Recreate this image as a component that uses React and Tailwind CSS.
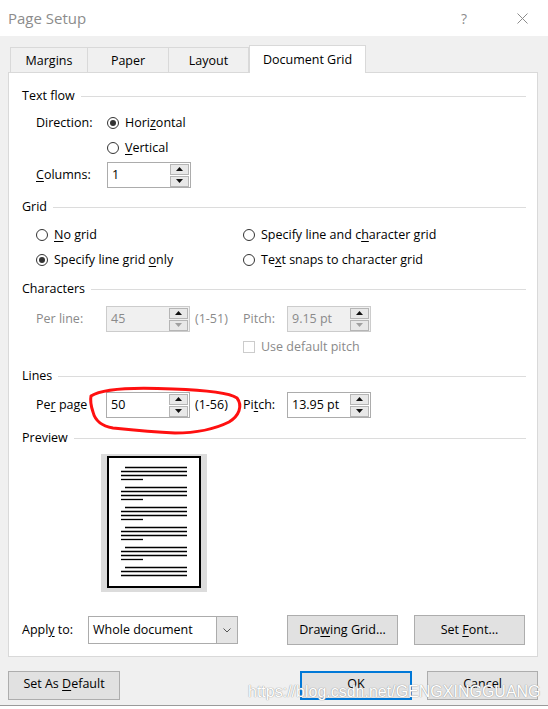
import React from "react";

const font = { fontFamily: '"Open Sans", "Noto Sans", sans-serif' };

// small underlined access key letter
const U = ({ children }) => <span className="underline underline-offset-2">{children}</span>;

const Radio = ({ checked, children }) => (
  <div className="flex items-center gap-[6px]">
    <span className="flex h-[12px] w-[12px] items-center justify-center rounded-full border border-[#333333] bg-white">
      {checked && <span className="h-[6px] w-[6px] rounded-full bg-[#333333]" />}
    </span>
    <span>{children}</span>
  </div>
);

const Arrow = ({ up, dim }) => (
  <svg width="7" height="4" viewBox="0 0 7 4">
    {up ? (
      <path d="M0 4 L3.5 0 L7 4 Z" fill={dim ? "#888" : "#111"} />
    ) : (
      <path d="M0 0 L3.5 4 L7 0 Z" fill={dim ? "#a0a0a0" : "#111"} />
    )}
  </svg>
);

const Spin = ({ value, disabled }) => (
  <div
    className={`flex h-[26px] w-[84px] items-center border ${
      disabled ? "border-[#cccccc] bg-[#f0f0f0] text-[#8a8a8a]" : "border-[#acacac] bg-white text-black"
    }`}
  >
    <span className="flex-1 pl-[4px]">{value}</span>
    <div className="mr-[1px] flex flex-col gap-[1px]">
      <span className="flex h-[11px] w-[19px] items-center justify-center border border-[#b5b5b5] bg-[#e8e8e8]">
        <Arrow up />
      </span>
      <span className="flex h-[11px] w-[19px] items-center justify-center border border-[#b5b5b5] bg-[#e8e8e8]">
        <Arrow dim={disabled} />
      </span>
    </div>
  </div>
);

const Section = ({ title }) => (
  <div className="flex h-[20px] items-center pr-[11px]">
    <span>{title}</span>
    <span className="ml-[6px] h-px flex-1 bg-[#dcdcdc]" />
  </div>
);

const Btn = ({ children, primary, className = "" }) => (
  <div
    className={`flex items-center justify-center bg-[#e1e1e1] ${
      primary ? "border-2 border-[#0078d7]" : "border border-[#adadad]"
    } ${className}`}
  >
    <span>{children}</span>
  </div>
);

const PreviewPage = () => {
  const groups = [0, 1, 2, 3, 4, 5];
  return (
    <svg width="106" height="138" viewBox="0 0 106 138">
      <rect x="0" y="0" width="106" height="138" fill="#dcdcdc" />
      <rect x="7" y="3" width="92" height="130" fill="#fff" stroke="#000" strokeWidth="2" />
      {groups.map((g) => {
        const y = 13.5 + g * 20;
        return (
          <g key={g} stroke="#000" strokeWidth="1.3">
            <line x1="24" y1={y} x2="86" y2={y} />
            <line x1="20" y1={y + 4} x2="86" y2={y + 4} />
            <line x1="20" y1={y + 8} x2="86" y2={y + 8} />
            {g < 5 && <line x1="20" y1={y + 12} x2="42" y2={y + 12} />}
          </g>
        );
      })}
    </svg>
  );
};

export default function App() {
  return (
    <div className="relative flex h-[709px] w-[548px] flex-col overflow-hidden bg-[#f0f0f0] text-[12.5px] text-black" style={font}>
      {/* title bar */}
      <div className="flex h-[36px] items-center bg-white pl-[8px] pr-[20px]">
        <span className="flex-1 text-[15px] text-[#8c8c8c]">Page Setup</span>
        <span className="mr-[50px] text-[14px] text-[#8c8c8c]">?</span>
        <svg width="11" height="11" viewBox="0 0 11 11">
          <path d="M0.5 0.5 L10.5 10.5 M10.5 0.5 L0.5 10.5" stroke="#8c8c8c" strokeWidth="1" />
        </svg>
      </div>

      {/* tabs */}
      <div className="mt-[9px] flex h-[27px] items-end pl-[10px]">
        <div className="flex h-[25px] w-[78px] items-center justify-center border border-b-0 border-[#d9d9d9] pt-[3px]">Margins</div>
        <div className="flex h-[25px] w-[81px] items-center justify-center border border-b-0 border-l-0 border-[#d9d9d9] pt-[3px]">Paper</div>
        <div className="flex h-[25px] w-[80px] items-center justify-center border border-b-0 border-l-0 border-[#d9d9d9] pt-[3px]">Layout</div>
        <div className="relative z-10 -mb-px flex h-[28px] w-[117px] items-center justify-center border border-b-0 border-[#d9d9d9] bg-white pt-[1px]">
          Document Grid
        </div>
      </div>

      {/* panel */}
      <div className="relative mx-[8px] flex h-[585px] w-[530px] flex-col border border-[#d9d9d9] bg-white pl-[13px]">
        <div className="mt-[13px]">
          <Section title="Text flow" />
        </div>
        <div className="mt-[5px] flex h-[24px] items-center pl-[14px]">
          <span className="w-[71px]">Direction:</span>
          <Radio checked>
            Hori<U>z</U>ontal
          </Radio>
        </div>
        <div className="mt-px flex h-[24px] items-center pl-[85px]">
          <Radio>
            <U>V</U>ertical
          </Radio>
        </div>
        <div className="mt-[2px] flex h-[26px] items-center pl-[14px]">
          <span className="w-[71px]">
            <U>C</U>olumns:
          </span>
          <Spin value="1" />
        </div>

        <div className="mt-[9px]">
          <Section title="Grid" />
        </div>
        <div className="mt-[6px] flex h-[24px] items-center pl-[14px]">
          <div className="w-[207px]">
            <Radio>
              <U>N</U>o grid
            </Radio>
          </div>
          <Radio>
            Specify line and c<U>h</U>aracter grid
          </Radio>
        </div>
        <div className="mt-px flex h-[24px] items-center pl-[14px]">
          <div className="w-[207px]">
            <Radio checked>
              Specify line grid <U>o</U>nly
            </Radio>
          </div>
          <Radio>
            Te<U>x</U>t snaps to character grid
          </Radio>
        </div>

        <div className="mt-[7px]">
          <Section title="Characters" />
        </div>
        <div className="mt-[7px] flex h-[26px] items-center pl-[14px] text-[#8a8a8a]">
          <span className="w-[70px]">Per line:</span>
          <Spin value="45" disabled />
          <span className="ml-[5px] w-[48px]">(1-51)</span>
          <span className="w-[44px]">Pitch:</span>
          <Spin value="9.15 pt" disabled />
        </div>
        <div className="mt-[3px] flex h-[24px] items-center pl-[221px] text-[#8a8a8a]">
          <span className="mr-[6px] h-[12px] w-[12px] border border-[#cccccc] bg-white" />
          Use default pitch
        </div>

        <div className="mt-[7px]">
          <Section title="Lines" />
        </div>
        <div className="mt-[6px] flex h-[26px] items-center pl-[14px]">
          <span className="w-[70px]">
            Pe<U>r</U> page
          </span>
          <Spin value="50" />
          <span className="ml-[5px] w-[48px]">(1-56)</span>
          <span className="w-[44px]">
            Pi<U>t</U>ch:
          </span>
          <Spin value="13.95 pt" />
        </div>

        <div className="mt-[10px]">
          <Section title="Preview" />
        </div>
        <div className="mt-[6px] pl-[79px]">
          <PreviewPage />
        </div>

        <div className="mt-[23px] flex h-[30px] items-center">
          <span className="w-[66px]">
            Appl<U>y</U> to:
          </span>
          <div className="flex h-[28px] w-[150px] items-center border border-[#acacac] bg-white">
            <span className="flex-1 pl-[4px]">Whole document</span>
            <span className="flex h-full w-[21px] items-center justify-center border-l border-[#acacac] bg-[#e5e5e5]">
              <svg width="8" height="5" viewBox="0 0 8 5">
                <path d="M0.5 0.5 L4 4 L7.5 0.5" fill="none" stroke="#555" strokeWidth="1" />
              </svg>
            </span>
          </div>
          <Btn className="ml-[49px] h-[30px] w-[111px]">
            Dra<U>w</U>ing Grid...
          </Btn>
          <Btn className="ml-[16px] h-[30px] w-[111px]">
            Set <U>F</U>ont...
          </Btn>
        </div>

        {/* red hand-drawn annotation */}
        <svg className="pointer-events-none absolute left-[74px] top-[311px]" width="164" height="54" viewBox="0 0 164 54">
          <path
            d="M8 12 C20 4 50 3 90 5 C120 6 145 8 154 14 C160 22 156 32 146 38 C130 46 110 49 92 49 C72 48 50 46 30 44 C18 42 12 36 10 28 C8 22 7 17 8 12"
            fill="none"
            stroke="#ff1010"
            strokeWidth="3"
            strokeLinecap="round"
          />
        </svg>
      </div>

      {/* bottom buttons */}
      <div className="mt-[14px] flex h-[29px] items-center px-[8px]">
        <Btn className="h-[29px] w-[112px] pb-[2px]">
          Set As <U>D</U>efault
        </Btn>
        <Btn primary className="ml-[180px] h-[29px] w-[112px] pb-[2px]">
          OK
        </Btn>
        <Btn className="ml-[15px] h-[29px] w-[111px] pb-[2px]">Cancel</Btn>
      </div>

      <div className="mt-auto h-[4px] border-t border-[#9a9a9a] bg-white" />

      {/* watermark */}
      <span
        className="pointer-events-none absolute left-[248px] top-[680px] text-[16px] text-white"
        style={{ fontFamily: '"Liberation Sans", Arial, sans-serif', textShadow: "0 0 1px #9a9a9a, 0 0 1px #9a9a9a" }}
      >
        https://blog.csdn.net/GENGXINGGUANG
      </span>
    </div>
  );
}
